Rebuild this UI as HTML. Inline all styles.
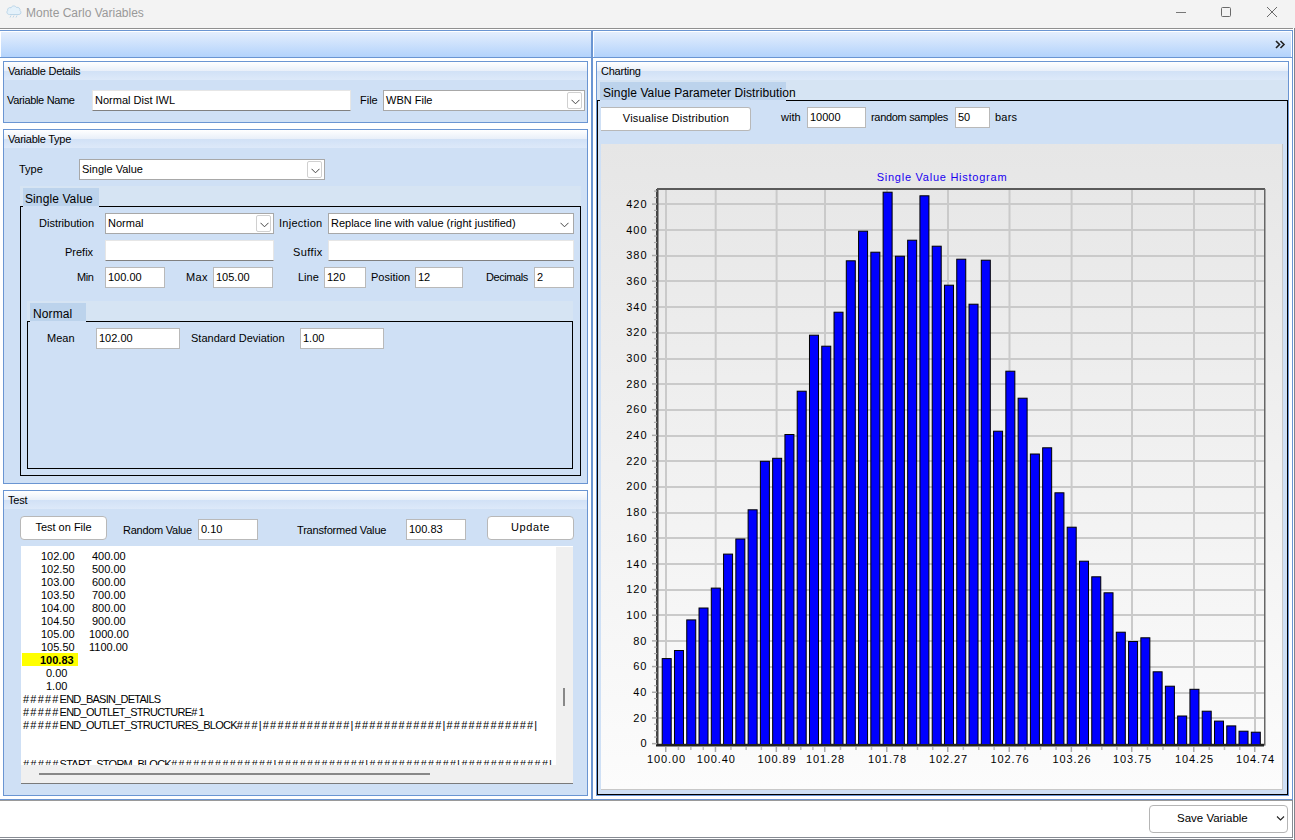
<!DOCTYPE html>
<html><head><meta charset="utf-8"><style>
html,body{margin:0;padding:0;width:1295px;height:840px;overflow:hidden;background:#fff}
body{position:relative;font-family:"Liberation Sans", sans-serif;font-size:11px;color:#000}
.t{position:absolute;white-space:pre;font-size:11px;line-height:13px}
</style></head><body>
<div style="position:absolute;left:0px;top:0px;width:1295px;height:28px;background:#f3f3f3"></div><svg style="position:absolute;left:5px;top:1px" width="18" height="18" viewBox="0 0 18 18">
<path d="M4.5 13.5 C2 13.5 1.2 11 2.6 9.6 C2.2 7.4 4.3 6 6 6.8 C6.8 4.6 10.2 4.2 11.3 6.4 C13.6 5.9 15.6 7.6 15 9.8 C16.6 10.5 16.2 13.5 14 13.5 Z" fill="#e4f1fa" stroke="#b7d3e6" stroke-width="0.9"/>
<path d="M6 14.5 l-1 2 M9 14.5 l-1 2 M12 14.5 l-1 2" stroke="#b7d3e6" stroke-width="0.9"/>
</svg><div class="t" style="left:26px;top:7px;font-size:12px;color:#999;letter-spacing:0px">Monte Carlo Variables</div><div style="position:absolute;left:1176px;top:12px;width:10px;height:1px;background:#777"></div><div style="position:absolute;left:1221px;top:7px;width:10px;height:10px;border:1px solid #6a6a6a;border-radius:1.5px;box-sizing:border-box"></div><svg style="position:absolute;left:1266px;top:6px" width="12" height="12" viewBox="0 0 12 12"><path d="M1 1 L11 11 M11 1 L1 11" stroke="#6a6a6a" stroke-width="1"/></svg><div style="position:absolute;left:0px;top:28px;width:1295px;height:1px;background:#8f8f8f"></div><div style="position:absolute;left:0px;top:29px;width:1295px;height:811px;background:#fff"></div><div style="position:absolute;left:0px;top:30px;width:592px;height:770px;border:1px solid #6a95d2;border-left:none;box-sizing:border-box"></div><div style="position:absolute;left:1px;top:32px;width:590px;height:25px;background:linear-gradient(#e4eefd,#b3d3fc)"></div><div style="position:absolute;left:0px;top:57px;width:592px;height:1px;background:#6a95d2"></div><div style="position:absolute;left:592px;top:30px;width:701px;height:770px;border:1px solid #6a95d2;box-sizing:border-box"></div><div style="position:absolute;left:594px;top:32px;width:697px;height:25px;background:linear-gradient(#e4eefd,#b3d3fc)"></div><div style="position:absolute;left:592px;top:57px;width:701px;height:1px;background:#6a95d2"></div><svg style="position:absolute;left:1275px;top:40px" width="11" height="10" viewBox="0 0 11 10"><path d="M1 1 L4.5 4.5 L1 8 M5.5 1 L9 4.5 L5.5 8" fill="none" stroke="#222" stroke-width="1.6"/></svg><div style="position:absolute;left:0px;top:799px;width:1295px;height:1px;background:#6a95d2"></div><div style="position:absolute;left:0px;top:800px;width:1295px;height:1px;background:#9a9a9a"></div><div style="position:absolute;left:0px;top:837px;width:1293px;height:1px;background:#878b93"></div><div style="position:absolute;left:0px;top:839px;width:1295px;height:1px;background:#80848c"></div><div style="position:absolute;left:1294px;top:28px;width:1px;height:812px;background:#80848c"></div><div style="position:absolute;left:1292px;top:800px;width:1px;height:37px;background:#878b93"></div><div style="position:absolute;left:1293px;top:28px;width:1px;height:812px;background:#fff"></div><div style="position:absolute;left:3px;top:61px;width:585px;height:62px;border:1px solid #6a95d2;box-sizing:border-box;background:#cfe0f5"></div><div style="position:absolute;left:4px;top:62px;width:583px;height:9px;background:linear-gradient(#ffffff,#e8eff9)"></div><div style="position:absolute;left:4px;top:71px;width:583px;height:9px;background:linear-gradient(#d1e1f6,#dde9f9)"></div><div class="t" style="left:8px;top:65px;letter-spacing:-0.24px">Variable Details</div><div class="t" style="left:7px;top:94px;letter-spacing:-0.33px">Variable Name</div><div style="position:absolute;left:92px;top:90px;width:259px;height:21px;background:#fff;border:1px solid #b9b9b9;box-sizing:border-box;border-color:#e6e6e6;border-bottom-color:#808080"></div><div class="t" style="left:95px;top:94px;">Normal Dist IWL</div><div class="t" style="left:360px;top:94px;">File</div><div style="position:absolute;left:383px;top:90px;width:202px;height:21px;background:#fff;border:1px solid #a8a8a8;box-sizing:border-box"></div><div style="position:absolute;left:567px;top:92px;width:15px;height:17px;border:1px solid #d0d0d0;border-radius:2px;box-sizing:border-box;background:#fff"></div><svg style="position:absolute;left:571px;top:99px" width="9" height="6" viewBox="0 0 9 6"><path d="M0.5 0.8 L4.5 4.8 L8.5 0.8" fill="none" stroke="#444" stroke-width="1"/></svg><div class="t" style="left:386px;top:94px;">WBN File</div><div style="position:absolute;left:3px;top:129px;width:585px;height:355px;border:1px solid #6a95d2;box-sizing:border-box;background:#cfe0f5"></div><div style="position:absolute;left:4px;top:130px;width:583px;height:9px;background:linear-gradient(#ffffff,#e8eff9)"></div><div style="position:absolute;left:4px;top:139px;width:583px;height:9px;background:linear-gradient(#d1e1f6,#dde9f9)"></div><div class="t" style="left:8px;top:133px;letter-spacing:-0.24px">Variable Type</div><div class="t" style="left:19px;top:163px;">Type</div><div style="position:absolute;left:79px;top:159px;width:246px;height:21px;background:#fff;border:1px solid #a8a8a8;box-sizing:border-box"></div><div style="position:absolute;left:307px;top:161px;width:15px;height:17px;border:1px solid #d0d0d0;border-radius:2px;box-sizing:border-box;background:#fff"></div><svg style="position:absolute;left:311px;top:168px" width="9" height="6" viewBox="0 0 9 6"><path d="M0.5 0.8 L4.5 4.8 L8.5 0.8" fill="none" stroke="#444" stroke-width="1"/></svg><div class="t" style="left:82px;top:163px;">Single Value</div><div style="position:absolute;left:20px;top:186px;width:561px;height:20px;background:#d6e4f3"></div><div style="position:absolute;left:23px;top:188px;width:76px;height:18px;background:#bcd3ec"></div><div class="t" style="left:25px;top:193px;font-size:12px;letter-spacing:0.1px">Single Value</div><div style="position:absolute;left:20px;top:206px;width:561px;height:270px;border:1px solid #000;border-top:none;box-sizing:border-box"></div><div style="position:absolute;left:99px;top:206px;width:482px;height:1px;background:#000"></div><div style="position:absolute;left:20px;top:206px;width:3px;height:1px;background:#000"></div><div class="t" style="left:39px;top:217px;">Distribution</div><div style="position:absolute;left:105px;top:213px;width:169px;height:21px;background:#fff;border:1px solid #a8a8a8;box-sizing:border-box"></div><div style="position:absolute;left:256px;top:215px;width:15px;height:17px;border:1px solid #d0d0d0;border-radius:2px;box-sizing:border-box;background:#fff"></div><svg style="position:absolute;left:260px;top:222px" width="9" height="6" viewBox="0 0 9 6"><path d="M0.5 0.8 L4.5 4.8 L8.5 0.8" fill="none" stroke="#444" stroke-width="1"/></svg><div class="t" style="left:108px;top:217px;">Normal</div><div class="t" style="left:279px;top:217px;letter-spacing:0.27px">Injection</div><div style="position:absolute;left:328px;top:213px;width:246px;height:21px;background:#fff;border:1px solid #a8a8a8;box-sizing:border-box"></div><svg style="position:absolute;left:560px;top:222px" width="9" height="6" viewBox="0 0 9 6"><path d="M0.5 0.8 L4.5 4.8 L8.5 0.8" fill="none" stroke="#444" stroke-width="1"/></svg><div class="t" style="left:331px;top:217px;">Replace line with value (right justified)</div><div class="t" style="left:65px;top:246px;">Prefix</div><div style="position:absolute;left:105px;top:240px;width:169px;height:21px;background:#fff;border:1px solid #b9b9b9;box-sizing:border-box;border-color:#e6e6e6;border-bottom-color:#808080"></div><div class="t" style="left:293px;top:246px;letter-spacing:0.38px">Suffix</div><div style="position:absolute;left:328px;top:240px;width:246px;height:21px;background:#fff;border:1px solid #b9b9b9;box-sizing:border-box;border-color:#e6e6e6;border-bottom-color:#808080"></div><div class="t" style="left:77px;top:271px;letter-spacing:-0.45px">Min</div><div style="position:absolute;left:105px;top:267px;width:60px;height:21px;background:#fff;border:1px solid #b9b9b9;box-sizing:border-box;"></div><div class="t" style="left:108px;top:271px;">100.00</div><div class="t" style="left:186px;top:271px;letter-spacing:0.35px">Max</div><div style="position:absolute;left:213px;top:267px;width:60px;height:21px;background:#fff;border:1px solid #b9b9b9;box-sizing:border-box;"></div><div class="t" style="left:216px;top:271px;">105.00</div><div class="t" style="left:298px;top:271px;">Line</div><div style="position:absolute;left:324px;top:267px;width:42px;height:21px;background:#fff;border:1px solid #b9b9b9;box-sizing:border-box;"></div><div class="t" style="left:327px;top:271px;">120</div><div class="t" style="left:371px;top:271px;">Position</div><div style="position:absolute;left:415px;top:267px;width:48px;height:21px;background:#fff;border:1px solid #b9b9b9;box-sizing:border-box;"></div><div class="t" style="left:418px;top:271px;">12</div><div class="t" style="left:486px;top:271px;letter-spacing:-0.43px">Decimals</div><div style="position:absolute;left:534px;top:267px;width:40px;height:21px;background:#fff;border:1px solid #b9b9b9;box-sizing:border-box;"></div><div class="t" style="left:537px;top:271px;">2</div><div style="position:absolute;left:27px;top:301px;width:546px;height:20px;background:#d6e4f3"></div><div style="position:absolute;left:30px;top:303px;width:56px;height:18px;background:#bcd3ec"></div><div class="t" style="left:33px;top:308px;font-size:12px;letter-spacing:0.1px">Normal</div><div style="position:absolute;left:27px;top:321px;width:546px;height:148px;border:1px solid #000;border-top:none;box-sizing:border-box"></div><div style="position:absolute;left:86px;top:321px;width:487px;height:1px;background:#000"></div><div style="position:absolute;left:27px;top:321px;width:3px;height:1px;background:#000"></div><div class="t" style="left:47px;top:332px;">Mean</div><div style="position:absolute;left:96px;top:328px;width:84px;height:21px;background:#fff;border:1px solid #b9b9b9;box-sizing:border-box;"></div><div class="t" style="left:99px;top:332px;">102.00</div><div class="t" style="left:191px;top:332px;">Standard Deviation</div><div style="position:absolute;left:300px;top:328px;width:84px;height:21px;background:#fff;border:1px solid #b9b9b9;box-sizing:border-box;"></div><div class="t" style="left:303px;top:332px;">1.00</div><div style="position:absolute;left:3px;top:490px;width:585px;height:306px;border:1px solid #6a95d2;box-sizing:border-box;background:#cfe0f5"></div><div style="position:absolute;left:4px;top:491px;width:583px;height:9px;background:linear-gradient(#ffffff,#e8eff9)"></div><div style="position:absolute;left:4px;top:500px;width:583px;height:9px;background:linear-gradient(#d1e1f6,#dde9f9)"></div><div class="t" style="left:8px;top:494px;letter-spacing:-0.24px">Test</div><div style="position:absolute;left:20px;top:516px;width:87px;height:24px;background:#fff;border:1px solid #b8b8b8;border-radius:4px;box-sizing:border-box;"></div><div class="t" style="left:20px;top:516px;width:87px;height:24px;line-height:22px;text-align:center">Test on File</div><div class="t" style="left:123px;top:524px;letter-spacing:-0.26px">Random Value</div><div style="position:absolute;left:198px;top:519px;width:60px;height:21px;background:#fff;border:1px solid #b9b9b9;box-sizing:border-box;"></div><div class="t" style="left:201px;top:523px;">0.10</div><div class="t" style="left:297px;top:524px;letter-spacing:-0.18px">Transformed Value</div><div style="position:absolute;left:406px;top:519px;width:60px;height:21px;background:#fff;border:1px solid #b9b9b9;box-sizing:border-box;"></div><div class="t" style="left:409px;top:523px;">100.83</div><div style="position:absolute;left:487px;top:516px;width:87px;height:24px;background:#fff;border:1px solid #b8b8b8;border-radius:4px;box-sizing:border-box;"></div><div class="t" style="left:487px;top:516px;width:87px;height:24px;line-height:22px;text-align:center"><span style="letter-spacing:0.6px">Update</span></div><div style="position:absolute;left:21px;top:546px;width:552px;height:238px;background:#fff;border-bottom:1px solid #7a7a7a;box-sizing:border-box"></div><div style="position:absolute;left:556px;top:547px;width:17px;height:219px;background:#f0f0f0"></div><div style="position:absolute;left:563px;top:688px;width:2px;height:18px;background:#888"></div><div style="position:absolute;left:21px;top:765px;width:552px;height:19px;background:#f0f0f0;border-bottom:1px solid #7a7a7a;box-sizing:border-box"></div><div style="position:absolute;left:39px;top:773px;width:391px;height:2px;background:#888"></div><div style="position:absolute;left:21px;top:546px;width:535px;height:219px;overflow:hidden"><div class="t" style="left:20px;top:4px;">102.00</div><div class="t" style="left:71px;top:4px;">400.00</div><div class="t" style="left:20px;top:17px;">102.50</div><div class="t" style="left:71px;top:17px;">500.00</div><div class="t" style="left:20px;top:30px;">103.00</div><div class="t" style="left:71px;top:30px;">600.00</div><div class="t" style="left:20px;top:43px;">103.50</div><div class="t" style="left:71px;top:43px;">700.00</div><div class="t" style="left:20px;top:56px;">104.00</div><div class="t" style="left:71px;top:56px;">800.00</div><div class="t" style="left:20px;top:69px;">104.50</div><div class="t" style="left:71px;top:69px;">900.00</div><div class="t" style="left:20px;top:82px;">105.00</div><div class="t" style="left:68px;top:82px;">1000.00</div><div class="t" style="left:20px;top:95px;">105.50</div><div class="t" style="left:68px;top:95px;">1100.00</div><div style="position:absolute;left:1px;top:107px;width:56px;height:13px;background:#ffff00"></div><div class="t" style="left:19px;top:108px;font-weight:bold">100.83</div><div class="t" style="left:25px;top:121px;">0.00</div><div class="t" style="left:25px;top:134px;">1.00</div><div class="t" style="left:2px;top:147px;"><span style="letter-spacing:-0.75px"><span style="letter-spacing:1.2px">#####</span>END_BASIN_DETAILS</span></div><div class="t" style="left:2px;top:160px;"><span style="letter-spacing:-0.75px"><span style="letter-spacing:1.2px">#####</span>END_OUTLET_STRUCTURE<span style="letter-spacing:1.2px">#</span>1</span></div><div class="t" style="left:2px;top:173px;"><span style="letter-spacing:-0.75px"><span style="letter-spacing:1.2px">#####</span>END_OUTLET_STRUCTURES_BLOCK<span style="letter-spacing:1.2px">###|############|############|############|</span></span></div><div class="t" style="left:2px;top:212px;"><span style="letter-spacing:-0.75px"><span style="letter-spacing:1.2px">#####</span>START_STORM_BLOCK<span style="letter-spacing:1.2px">##############|############|############|############|</span></span></div></div><div style="position:absolute;left:596px;top:61px;width:693px;height:735px;border:1px solid #6a95d2;box-sizing:border-box;background:#cfe0f5"></div><div style="position:absolute;left:597px;top:62px;width:691px;height:9px;background:linear-gradient(#ffffff,#e8eff9)"></div><div style="position:absolute;left:597px;top:71px;width:691px;height:9px;background:linear-gradient(#d1e1f6,#dde9f9)"></div><div class="t" style="left:601px;top:65px;letter-spacing:-0.24px">Charting</div><div style="position:absolute;left:597px;top:80px;width:691px;height:20px;background:#d6e4f3"></div><div style="position:absolute;left:600px;top:82px;width:186px;height:18px;background:#bcd3ec"></div><div class="t" style="left:603px;top:87px;font-size:12px;letter-spacing:0.1px">Single Value Parameter Distribution</div><div style="position:absolute;left:597px;top:100px;width:691px;height:695px;border:1px solid #000;border-top:none;box-sizing:border-box"></div><div style="position:absolute;left:786px;top:100px;width:502px;height:1px;background:#000"></div><div style="position:absolute;left:597px;top:100px;width:3px;height:1px;background:#000"></div><div style="position:absolute;left:601px;top:107px;width:150px;height:24px;background:#fff;border:1px solid #b8b8b8;border-radius:4px;box-sizing:border-box;border-left:none;border-radius:0 3px 3px 0"></div><div class="t" style="left:601px;top:107px;width:150px;height:24px;line-height:22px;text-align:center"><span style="letter-spacing:0.2px">Visualise Distribution</span></div><div class="t" style="left:781px;top:111px;">with</div><div style="position:absolute;left:807px;top:107px;width:59px;height:21px;background:#fff;border:1px solid #b9b9b9;box-sizing:border-box;"></div><div class="t" style="left:810px;top:111px;">10000</div><div class="t" style="left:871px;top:111px;letter-spacing:-0.31px">random samples</div><div style="position:absolute;left:955px;top:107px;width:35px;height:21px;background:#fff;border:1px solid #b9b9b9;box-sizing:border-box;"></div><div class="t" style="left:958px;top:111px;">50</div><div class="t" style="left:995px;top:111px;letter-spacing:0.2px">bars</div><svg style="position:absolute;left:601px;top:144px" width="682" height="646" viewBox="0 0 682 646"><defs><linearGradient id="bg" x1="0" y1="0" x2="0" y2="1"><stop offset="0" stop-color="#e6e6e6"/><stop offset="1" stop-color="#fcfcfc"/></linearGradient></defs><rect x="0" y="0" width="681" height="645" fill="url(#bg)"/><rect x="681" y="0" width="1" height="646" fill="#c8c8c8"/><rect x="0" y="645" width="682" height="1" fill="#c8c8c8"/><rect x="56" y="599" width="607" height="2" fill="#cacaca"/><rect x="56" y="573" width="607" height="2" fill="#cacaca"/><rect x="56" y="548" width="607" height="2" fill="#cacaca"/><rect x="56" y="522" width="607" height="2" fill="#cacaca"/><rect x="56" y="496" width="607" height="2" fill="#cacaca"/><rect x="56" y="470" width="607" height="2" fill="#cacaca"/><rect x="56" y="445" width="607" height="2" fill="#cacaca"/><rect x="56" y="419" width="607" height="2" fill="#cacaca"/><rect x="56" y="393" width="607" height="2" fill="#cacaca"/><rect x="56" y="368" width="607" height="2" fill="#cacaca"/><rect x="56" y="342" width="607" height="2" fill="#cacaca"/><rect x="56" y="316" width="607" height="2" fill="#cacaca"/><rect x="56" y="291" width="607" height="2" fill="#cacaca"/><rect x="56" y="265" width="607" height="2" fill="#cacaca"/><rect x="56" y="239" width="607" height="2" fill="#cacaca"/><rect x="56" y="214" width="607" height="2" fill="#cacaca"/><rect x="56" y="188" width="607" height="2" fill="#cacaca"/><rect x="56" y="162" width="607" height="2" fill="#cacaca"/><rect x="56" y="136" width="607" height="2" fill="#cacaca"/><rect x="56" y="111" width="607" height="2" fill="#cacaca"/><rect x="56" y="85" width="607" height="2" fill="#cacaca"/><rect x="56" y="59" width="607" height="2" fill="#cacaca"/><rect x="64" y="45" width="2" height="555.6" fill="#cacaca"/><rect x="113.70000000000005" y="45" width="2" height="555.6" fill="#cacaca"/><rect x="174.60000000000002" y="45" width="2" height="555.6" fill="#cacaca"/><rect x="223" y="45" width="2" height="555.6" fill="#cacaca"/><rect x="285" y="45" width="2" height="555.6" fill="#cacaca"/><rect x="346" y="45" width="2" height="555.6" fill="#cacaca"/><rect x="407.5" y="45" width="2" height="555.6" fill="#cacaca"/><rect x="469.5999999999999" y="45" width="2" height="555.6" fill="#cacaca"/><rect x="530" y="45" width="2" height="555.6" fill="#cacaca"/><rect x="592" y="45" width="2" height="555.6" fill="#cacaca"/><rect x="653" y="45" width="2" height="555.6" fill="#cacaca"/><rect x="61.20" y="514.60" width="9" height="86.00" fill="#0000ff" stroke="#000" stroke-width="1"/><rect x="73.47" y="506.50" width="9" height="94.10" fill="#0000ff" stroke="#000" stroke-width="1"/><rect x="85.75" y="475.90" width="9" height="124.70" fill="#0000ff" stroke="#000" stroke-width="1"/><rect x="98.02" y="464.00" width="9" height="136.60" fill="#0000ff" stroke="#000" stroke-width="1"/><rect x="110.29" y="444.10" width="9" height="156.50" fill="#0000ff" stroke="#000" stroke-width="1"/><rect x="122.57" y="410.10" width="9" height="190.50" fill="#0000ff" stroke="#000" stroke-width="1"/><rect x="134.84" y="395.00" width="9" height="205.60" fill="#0000ff" stroke="#000" stroke-width="1"/><rect x="147.11" y="365.80" width="9" height="234.80" fill="#0000ff" stroke="#000" stroke-width="1"/><rect x="159.38" y="317.30" width="9" height="283.30" fill="#0000ff" stroke="#000" stroke-width="1"/><rect x="171.66" y="314.30" width="9" height="286.30" fill="#0000ff" stroke="#000" stroke-width="1"/><rect x="183.93" y="290.50" width="9" height="310.10" fill="#0000ff" stroke="#000" stroke-width="1"/><rect x="196.20" y="247.20" width="9" height="353.40" fill="#0000ff" stroke="#000" stroke-width="1"/><rect x="208.48" y="191.20" width="9" height="409.40" fill="#0000ff" stroke="#000" stroke-width="1"/><rect x="220.75" y="202.20" width="9" height="398.40" fill="#0000ff" stroke="#000" stroke-width="1"/><rect x="233.02" y="168.20" width="9" height="432.40" fill="#0000ff" stroke="#000" stroke-width="1"/><rect x="245.30" y="116.80" width="9" height="483.80" fill="#0000ff" stroke="#000" stroke-width="1"/><rect x="257.57" y="87.20" width="9" height="513.40" fill="#0000ff" stroke="#000" stroke-width="1"/><rect x="269.84" y="108.20" width="9" height="492.40" fill="#0000ff" stroke="#000" stroke-width="1"/><rect x="282.11" y="48.20" width="9" height="552.40" fill="#0000ff" stroke="#000" stroke-width="1"/><rect x="294.39" y="112.20" width="9" height="488.40" fill="#0000ff" stroke="#000" stroke-width="1"/><rect x="306.66" y="96.20" width="9" height="504.40" fill="#0000ff" stroke="#000" stroke-width="1"/><rect x="318.93" y="51.80" width="9" height="548.80" fill="#0000ff" stroke="#000" stroke-width="1"/><rect x="331.21" y="102.20" width="9" height="498.40" fill="#0000ff" stroke="#000" stroke-width="1"/><rect x="343.48" y="141.20" width="9" height="459.40" fill="#0000ff" stroke="#000" stroke-width="1"/><rect x="355.75" y="115.20" width="9" height="485.40" fill="#0000ff" stroke="#000" stroke-width="1"/><rect x="368.03" y="160.20" width="9" height="440.40" fill="#0000ff" stroke="#000" stroke-width="1"/><rect x="380.30" y="116.20" width="9" height="484.40" fill="#0000ff" stroke="#000" stroke-width="1"/><rect x="392.57" y="287.20" width="9" height="313.40" fill="#0000ff" stroke="#000" stroke-width="1"/><rect x="404.84" y="227.20" width="9" height="373.40" fill="#0000ff" stroke="#000" stroke-width="1"/><rect x="417.12" y="254.20" width="9" height="346.40" fill="#0000ff" stroke="#000" stroke-width="1"/><rect x="429.39" y="310.00" width="9" height="290.60" fill="#0000ff" stroke="#000" stroke-width="1"/><rect x="441.66" y="303.80" width="9" height="296.80" fill="#0000ff" stroke="#000" stroke-width="1"/><rect x="453.94" y="348.80" width="9" height="251.80" fill="#0000ff" stroke="#000" stroke-width="1"/><rect x="466.21" y="383.20" width="9" height="217.40" fill="#0000ff" stroke="#000" stroke-width="1"/><rect x="478.48" y="417.20" width="9" height="183.40" fill="#0000ff" stroke="#000" stroke-width="1"/><rect x="490.76" y="432.80" width="9" height="167.80" fill="#0000ff" stroke="#000" stroke-width="1"/><rect x="503.03" y="448.80" width="9" height="151.80" fill="#0000ff" stroke="#000" stroke-width="1"/><rect x="515.30" y="488.20" width="9" height="112.40" fill="#0000ff" stroke="#000" stroke-width="1"/><rect x="527.57" y="497.50" width="9" height="103.10" fill="#0000ff" stroke="#000" stroke-width="1"/><rect x="539.85" y="493.80" width="9" height="106.80" fill="#0000ff" stroke="#000" stroke-width="1"/><rect x="552.12" y="527.80" width="9" height="72.80" fill="#0000ff" stroke="#000" stroke-width="1"/><rect x="564.39" y="542.20" width="9" height="58.40" fill="#0000ff" stroke="#000" stroke-width="1"/><rect x="576.67" y="572.00" width="9" height="28.60" fill="#0000ff" stroke="#000" stroke-width="1"/><rect x="588.94" y="545.30" width="9" height="55.30" fill="#0000ff" stroke="#000" stroke-width="1"/><rect x="601.21" y="567.20" width="9" height="33.40" fill="#0000ff" stroke="#000" stroke-width="1"/><rect x="613.49" y="577.10" width="9" height="23.50" fill="#0000ff" stroke="#000" stroke-width="1"/><rect x="625.76" y="581.90" width="9" height="18.70" fill="#0000ff" stroke="#000" stroke-width="1"/><rect x="638.03" y="587.20" width="9" height="13.40" fill="#0000ff" stroke="#000" stroke-width="1"/><rect x="650.30" y="588.20" width="9" height="12.40" fill="#0000ff" stroke="#000" stroke-width="1"/><rect x="55" y="45" width="2.5" height="556.6" fill="#444"/><rect x="55" y="600" width="608" height="2.5" fill="#222"/><rect x="56" y="44" width="608" height="2" fill="#5a5a5a"/><rect x="663" y="45" width="1.5" height="556.6" fill="#666"/><rect x="51" y="598.9" width="5" height="1.5" fill="#aaa"/><rect x="53" y="592.477" width="3" height="1.2" fill="#aaa"/><rect x="53" y="586.054" width="3" height="1.2" fill="#aaa"/><rect x="53" y="579.631" width="3" height="1.2" fill="#aaa"/><rect x="51" y="573.208" width="5" height="1.5" fill="#aaa"/><rect x="53" y="566.785" width="3" height="1.2" fill="#aaa"/><rect x="53" y="560.362" width="3" height="1.2" fill="#aaa"/><rect x="53" y="553.939" width="3" height="1.2" fill="#aaa"/><rect x="51" y="547.516" width="5" height="1.5" fill="#aaa"/><rect x="53" y="541.093" width="3" height="1.2" fill="#aaa"/><rect x="53" y="534.67" width="3" height="1.2" fill="#aaa"/><rect x="53" y="528.247" width="3" height="1.2" fill="#aaa"/><rect x="51" y="521.824" width="5" height="1.5" fill="#aaa"/><rect x="53" y="515.401" width="3" height="1.2" fill="#aaa"/><rect x="53" y="508.97799999999995" width="3" height="1.2" fill="#aaa"/><rect x="53" y="502.55499999999995" width="3" height="1.2" fill="#aaa"/><rect x="51" y="496.13199999999995" width="5" height="1.5" fill="#aaa"/><rect x="53" y="489.70899999999995" width="3" height="1.2" fill="#aaa"/><rect x="53" y="483.28599999999994" width="3" height="1.2" fill="#aaa"/><rect x="53" y="476.86299999999994" width="3" height="1.2" fill="#aaa"/><rect x="51" y="470.43999999999994" width="5" height="1.5" fill="#aaa"/><rect x="53" y="464.01699999999994" width="3" height="1.2" fill="#aaa"/><rect x="53" y="457.59400000000005" width="3" height="1.2" fill="#aaa"/><rect x="53" y="451.17100000000005" width="3" height="1.2" fill="#aaa"/><rect x="51" y="444.74800000000005" width="5" height="1.5" fill="#aaa"/><rect x="53" y="438.32500000000005" width="3" height="1.2" fill="#aaa"/><rect x="53" y="431.90200000000004" width="3" height="1.2" fill="#aaa"/><rect x="53" y="425.47900000000004" width="3" height="1.2" fill="#aaa"/><rect x="51" y="419.05600000000004" width="5" height="1.5" fill="#aaa"/><rect x="53" y="412.63300000000004" width="3" height="1.2" fill="#aaa"/><rect x="53" y="406.21000000000004" width="3" height="1.2" fill="#aaa"/><rect x="53" y="399.78700000000003" width="3" height="1.2" fill="#aaa"/><rect x="51" y="393.36400000000003" width="5" height="1.5" fill="#aaa"/><rect x="53" y="386.94100000000003" width="3" height="1.2" fill="#aaa"/><rect x="53" y="380.51800000000003" width="3" height="1.2" fill="#aaa"/><rect x="53" y="374.095" width="3" height="1.2" fill="#aaa"/><rect x="51" y="367.672" width="5" height="1.5" fill="#aaa"/><rect x="53" y="361.249" width="3" height="1.2" fill="#aaa"/><rect x="53" y="354.826" width="3" height="1.2" fill="#aaa"/><rect x="53" y="348.403" width="3" height="1.2" fill="#aaa"/><rect x="51" y="341.97999999999996" width="5" height="1.5" fill="#aaa"/><rect x="53" y="335.55699999999996" width="3" height="1.2" fill="#aaa"/><rect x="53" y="329.13399999999996" width="3" height="1.2" fill="#aaa"/><rect x="53" y="322.711" width="3" height="1.2" fill="#aaa"/><rect x="51" y="316.288" width="5" height="1.5" fill="#aaa"/><rect x="53" y="309.865" width="3" height="1.2" fill="#aaa"/><rect x="53" y="303.442" width="3" height="1.2" fill="#aaa"/><rect x="53" y="297.019" width="3" height="1.2" fill="#aaa"/><rect x="51" y="290.596" width="5" height="1.5" fill="#aaa"/><rect x="53" y="284.173" width="3" height="1.2" fill="#aaa"/><rect x="53" y="277.75" width="3" height="1.2" fill="#aaa"/><rect x="53" y="271.327" width="3" height="1.2" fill="#aaa"/><rect x="51" y="264.904" width="5" height="1.5" fill="#aaa"/><rect x="53" y="258.481" width="3" height="1.2" fill="#aaa"/><rect x="53" y="252.058" width="3" height="1.2" fill="#aaa"/><rect x="53" y="245.635" width="3" height="1.2" fill="#aaa"/><rect x="51" y="239.212" width="5" height="1.5" fill="#aaa"/><rect x="53" y="232.789" width="3" height="1.2" fill="#aaa"/><rect x="53" y="226.36599999999999" width="3" height="1.2" fill="#aaa"/><rect x="53" y="219.94299999999998" width="3" height="1.2" fill="#aaa"/><rect x="51" y="213.51999999999998" width="5" height="1.5" fill="#aaa"/><rect x="53" y="207.09699999999998" width="3" height="1.2" fill="#aaa"/><rect x="53" y="200.67399999999998" width="3" height="1.2" fill="#aaa"/><rect x="53" y="194.25099999999998" width="3" height="1.2" fill="#aaa"/><rect x="51" y="187.82799999999997" width="5" height="1.5" fill="#aaa"/><rect x="53" y="181.40499999999997" width="3" height="1.2" fill="#aaa"/><rect x="53" y="174.98199999999997" width="3" height="1.2" fill="#aaa"/><rect x="53" y="168.55899999999997" width="3" height="1.2" fill="#aaa"/><rect x="51" y="162.13599999999997" width="5" height="1.5" fill="#aaa"/><rect x="53" y="155.71299999999997" width="3" height="1.2" fill="#aaa"/><rect x="53" y="149.28999999999996" width="3" height="1.2" fill="#aaa"/><rect x="53" y="142.86699999999996" width="3" height="1.2" fill="#aaa"/><rect x="51" y="136.44400000000002" width="5" height="1.5" fill="#aaa"/><rect x="53" y="130.02100000000002" width="3" height="1.2" fill="#aaa"/><rect x="53" y="123.59800000000001" width="3" height="1.2" fill="#aaa"/><rect x="53" y="117.17500000000001" width="3" height="1.2" fill="#aaa"/><rect x="51" y="110.75200000000001" width="5" height="1.5" fill="#aaa"/><rect x="53" y="104.32900000000001" width="3" height="1.2" fill="#aaa"/><rect x="53" y="97.906" width="3" height="1.2" fill="#aaa"/><rect x="53" y="91.483" width="3" height="1.2" fill="#aaa"/><rect x="51" y="85.05999999999995" width="5" height="1.5" fill="#aaa"/><rect x="53" y="78.63699999999994" width="3" height="1.2" fill="#aaa"/><rect x="53" y="72.21399999999994" width="3" height="1.2" fill="#aaa"/><rect x="53" y="65.79099999999994" width="3" height="1.2" fill="#aaa"/><rect x="51" y="59.36799999999994" width="5" height="1.5" fill="#aaa"/><rect x="53" y="52.944999999999936" width="3" height="1.2" fill="#aaa"/><rect x="53" y="46.52200000000005" width="3" height="1.2" fill="#aaa"/><text x="46.5" y="603.4" text-anchor="end" font-family="Liberation Sans" font-size="11" letter-spacing="1" fill="#000">0</text><text x="46.5" y="577.708" text-anchor="end" font-family="Liberation Sans" font-size="11" letter-spacing="1" fill="#000">20</text><text x="46.5" y="552.016" text-anchor="end" font-family="Liberation Sans" font-size="11" letter-spacing="1" fill="#000">40</text><text x="46.5" y="526.324" text-anchor="end" font-family="Liberation Sans" font-size="11" letter-spacing="1" fill="#000">60</text><text x="46.5" y="500.63199999999995" text-anchor="end" font-family="Liberation Sans" font-size="11" letter-spacing="1" fill="#000">80</text><text x="46.5" y="474.93999999999994" text-anchor="end" font-family="Liberation Sans" font-size="11" letter-spacing="1" fill="#000">100</text><text x="46.5" y="449.24800000000005" text-anchor="end" font-family="Liberation Sans" font-size="11" letter-spacing="1" fill="#000">120</text><text x="46.5" y="423.55600000000004" text-anchor="end" font-family="Liberation Sans" font-size="11" letter-spacing="1" fill="#000">140</text><text x="46.5" y="397.86400000000003" text-anchor="end" font-family="Liberation Sans" font-size="11" letter-spacing="1" fill="#000">160</text><text x="46.5" y="372.172" text-anchor="end" font-family="Liberation Sans" font-size="11" letter-spacing="1" fill="#000">180</text><text x="46.5" y="346.47999999999996" text-anchor="end" font-family="Liberation Sans" font-size="11" letter-spacing="1" fill="#000">200</text><text x="46.5" y="320.788" text-anchor="end" font-family="Liberation Sans" font-size="11" letter-spacing="1" fill="#000">220</text><text x="46.5" y="295.096" text-anchor="end" font-family="Liberation Sans" font-size="11" letter-spacing="1" fill="#000">240</text><text x="46.5" y="269.404" text-anchor="end" font-family="Liberation Sans" font-size="11" letter-spacing="1" fill="#000">260</text><text x="46.5" y="243.712" text-anchor="end" font-family="Liberation Sans" font-size="11" letter-spacing="1" fill="#000">280</text><text x="46.5" y="218.01999999999998" text-anchor="end" font-family="Liberation Sans" font-size="11" letter-spacing="1" fill="#000">300</text><text x="46.5" y="192.32799999999997" text-anchor="end" font-family="Liberation Sans" font-size="11" letter-spacing="1" fill="#000">320</text><text x="46.5" y="166.63599999999997" text-anchor="end" font-family="Liberation Sans" font-size="11" letter-spacing="1" fill="#000">340</text><text x="46.5" y="140.94400000000002" text-anchor="end" font-family="Liberation Sans" font-size="11" letter-spacing="1" fill="#000">360</text><text x="46.5" y="115.25200000000001" text-anchor="end" font-family="Liberation Sans" font-size="11" letter-spacing="1" fill="#000">380</text><text x="46.5" y="89.55999999999995" text-anchor="end" font-family="Liberation Sans" font-size="11" letter-spacing="1" fill="#000">400</text><text x="46.5" y="63.86799999999994" text-anchor="end" font-family="Liberation Sans" font-size="11" letter-spacing="1" fill="#000">420</text><rect x="76.67" y="603" width="1.5" height="3" fill="#bbb"/><rect x="89.10" y="603" width="1.5" height="3" fill="#bbb"/><rect x="101.53" y="603" width="1.5" height="3" fill="#bbb"/><rect x="129.18" y="603" width="1.5" height="3" fill="#bbb"/><rect x="144.40" y="603" width="1.5" height="3" fill="#bbb"/><rect x="159.62" y="603" width="1.5" height="3" fill="#bbb"/><rect x="186.95" y="603" width="1.5" height="3" fill="#bbb"/><rect x="199.05" y="603" width="1.5" height="3" fill="#bbb"/><rect x="211.15" y="603" width="1.5" height="3" fill="#bbb"/><rect x="238.75" y="603" width="1.5" height="3" fill="#bbb"/><rect x="254.25" y="603" width="1.5" height="3" fill="#bbb"/><rect x="269.75" y="603" width="1.5" height="3" fill="#bbb"/><rect x="300.50" y="603" width="1.5" height="3" fill="#bbb"/><rect x="315.75" y="603" width="1.5" height="3" fill="#bbb"/><rect x="331.00" y="603" width="1.5" height="3" fill="#bbb"/><rect x="361.62" y="603" width="1.5" height="3" fill="#bbb"/><rect x="377.00" y="603" width="1.5" height="3" fill="#bbb"/><rect x="392.38" y="603" width="1.5" height="3" fill="#bbb"/><rect x="423.28" y="603" width="1.5" height="3" fill="#bbb"/><rect x="438.80" y="603" width="1.5" height="3" fill="#bbb"/><rect x="454.32" y="603" width="1.5" height="3" fill="#bbb"/><rect x="484.95" y="603" width="1.5" height="3" fill="#bbb"/><rect x="500.05" y="603" width="1.5" height="3" fill="#bbb"/><rect x="515.15" y="603" width="1.5" height="3" fill="#bbb"/><rect x="545.75" y="603" width="1.5" height="3" fill="#bbb"/><rect x="561.25" y="603" width="1.5" height="3" fill="#bbb"/><rect x="576.75" y="603" width="1.5" height="3" fill="#bbb"/><rect x="607.50" y="603" width="1.5" height="3" fill="#bbb"/><rect x="622.75" y="603" width="1.5" height="3" fill="#bbb"/><rect x="638.00" y="603" width="1.5" height="3" fill="#bbb"/><rect x="64" y="603" width="1.5" height="5" fill="#aaa"/><text x="65.45" y="619" text-anchor="middle" font-family="Liberation Sans" font-size="11" letter-spacing="0.9" fill="#000">100.00</text><rect x="113.70000000000005" y="603" width="1.5" height="5" fill="#aaa"/><text x="115.15000000000005" y="619" text-anchor="middle" font-family="Liberation Sans" font-size="11" letter-spacing="0.9" fill="#000">100.40</text><rect x="174.60000000000002" y="603" width="1.5" height="5" fill="#aaa"/><text x="176.05" y="619" text-anchor="middle" font-family="Liberation Sans" font-size="11" letter-spacing="0.9" fill="#000">100.89</text><rect x="223" y="603" width="1.5" height="5" fill="#aaa"/><text x="224.45" y="619" text-anchor="middle" font-family="Liberation Sans" font-size="11" letter-spacing="0.9" fill="#000">101.28</text><rect x="285" y="603" width="1.5" height="5" fill="#aaa"/><text x="286.45" y="619" text-anchor="middle" font-family="Liberation Sans" font-size="11" letter-spacing="0.9" fill="#000">101.78</text><rect x="346" y="603" width="1.5" height="5" fill="#aaa"/><text x="347.45" y="619" text-anchor="middle" font-family="Liberation Sans" font-size="11" letter-spacing="0.9" fill="#000">102.27</text><rect x="407.5" y="603" width="1.5" height="5" fill="#aaa"/><text x="408.95" y="619" text-anchor="middle" font-family="Liberation Sans" font-size="11" letter-spacing="0.9" fill="#000">102.76</text><rect x="469.5999999999999" y="603" width="1.5" height="5" fill="#aaa"/><text x="471.0499999999999" y="619" text-anchor="middle" font-family="Liberation Sans" font-size="11" letter-spacing="0.9" fill="#000">103.26</text><rect x="530" y="603" width="1.5" height="5" fill="#aaa"/><text x="531.45" y="619" text-anchor="middle" font-family="Liberation Sans" font-size="11" letter-spacing="0.9" fill="#000">103.75</text><rect x="592" y="603" width="1.5" height="5" fill="#aaa"/><text x="593.45" y="619" text-anchor="middle" font-family="Liberation Sans" font-size="11" letter-spacing="0.9" fill="#000">104.25</text><rect x="653" y="603" width="1.5" height="5" fill="#aaa"/><text x="654.45" y="619" text-anchor="middle" font-family="Liberation Sans" font-size="11" letter-spacing="0.9" fill="#000">104.74</text><text x="341" y="37" text-anchor="middle" font-family="Liberation Sans" font-size="11" letter-spacing="0.75" fill="#1a00f0">Single Value Histogram</text></svg><div style="position:absolute;left:1149px;top:805px;width:139px;height:28px;background:#fff;border:1px solid #b5b5b5;border-radius:4px;box-sizing:border-box"></div><div class="t" style="left:1177px;top:812px;font-size:11.5px">Save Variable</div><svg style="position:absolute;left:1276px;top:815px" width="9" height="7" viewBox="0 0 9 7"><path d="M1 1.5 L4.5 5 L8 1.5" fill="none" stroke="#222" stroke-width="1.1"/></svg>
</body></html>
